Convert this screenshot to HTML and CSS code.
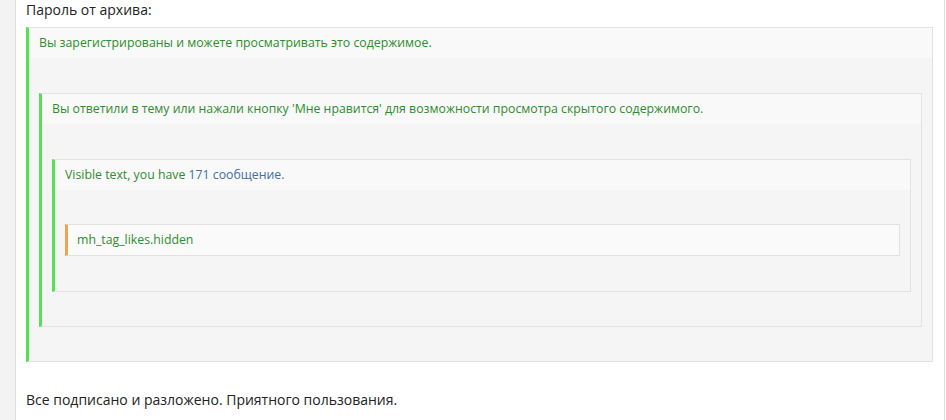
FILE: index.html
```html
<!DOCTYPE html>
<html lang="ru">
<head>
<meta charset="utf-8">
<title>Пароль от архива</title>
<link rel="stylesheet" href="styles.css">
</head>
<body>
<div class="page">
  <div class="gutter"></div>
  <div class="content">
    <div class="title">Пароль от архива:</div>
    <div class="hide box-green">
      <div class="hide-head">Вы зарегистрированы и можете просматривать это содержимое.</div>
      <div class="hide-body">
        <div class="hide box-green">
          <div class="hide-head">Вы ответили в тему или нажали кнопку 'Мне нравится' для возможности просмотра скрытого содержимого.</div>
          <div class="hide-body">
            <div class="hide box-green">
              <div class="hide-head">Visible text, you have <span class="count">171 сообщение.</span></div>
              <div class="hide-body hide-body-inner">
                <div class="hide box-orange">
                  <div class="hide-head">mh_tag_likes.hidden</div>
                </div>
              </div>
            </div>
          </div>
        </div>
      </div>
    </div>
    <div class="footer-text">Все подписано и разложено. Приятного пользования.</div>
  </div>
</div>
</body>
</html>
```

FILE: styles.css
```css
html, body {
  margin: 0;
  padding: 0;
  background: #ffffff;
}
body {
  font-family: "Open Sans", "Noto Sans", sans-serif;
  color: #222222;
}
.page {
  display: flex;
  width: 946px;
  height: 420px;
}
.gutter {
  width: 15px;
  background: #f3f3f3;
  flex: none;
}
.content {
  box-sizing: border-box;
  width: 930px;
  flex: none;
  border-left: 1px solid #dedede;
  border-right: 1px solid #dedede;
  padding: 0 11px 0 10px;
}
.title {
  font-size: 14px;
  line-height: 20px;
  height: 27px;
}
.hide {
  border: 1px solid #e2e2e2;
  background: #f5f5f5;
}
.box-green {
  border-left: 3px solid #57e057;
}
.box-orange {
  border-left: 3px solid #e9a552;
  background: #fafafa;
}
.hide-head {
  background: #f9f9f9;
  color: #2f8c2f;
  font-size: 12.3px;
  line-height: 16px;
  padding: 7px 10px;
}
.box-orange .hide-head {
  padding: 7px 9px;
  background: #fafafa;
}
.count {
  color: #3f6f9f;
}
.hide-body {
  padding: 35px 10px 34px;
}
.hide-body-inner {
  padding-top: 34px;
  padding-bottom: 35px;
}
.footer-text {
  font-size: 14px;
  line-height: 20px;
  margin-top: 28px;
}
```
